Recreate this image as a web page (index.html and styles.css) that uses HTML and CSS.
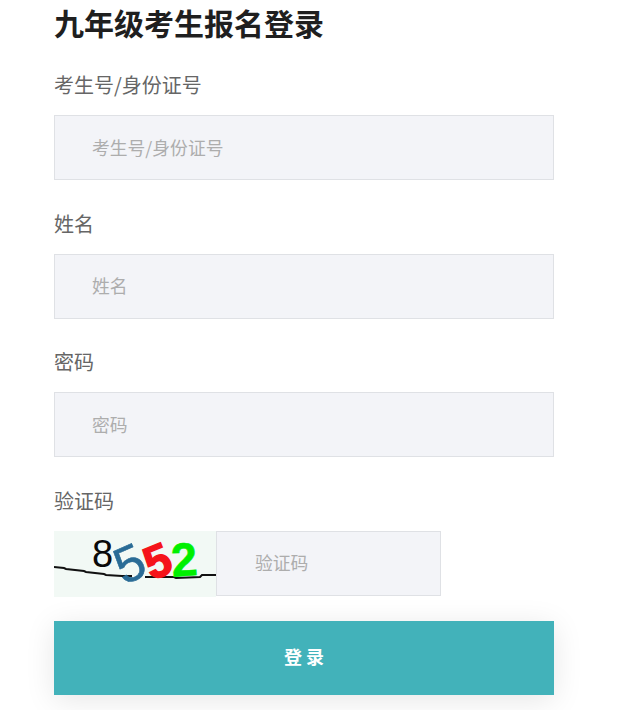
FILE: index.html
```html
<!DOCTYPE html>
<html lang="zh-CN">
<head>
<meta charset="utf-8">
<title>九年级考生报名登录</title>
<link rel="stylesheet" href="styles.css">
</head>
<body>
<main class="panel">
  <h1 class="title">九年级考生报名登录</h1>
  <form class="form">
    <div class="group">
      <label class="label">考生号/身份证号</label>
      <input class="field" type="text" placeholder="考生号/身份证号">
    </div>
    <div class="group">
      <label class="label">姓名</label>
      <input class="field" type="text" placeholder="姓名">
    </div>
    <div class="group">
      <label class="label">密码</label>
      <input class="field" type="password" placeholder="密码">
    </div>
    <div class="group group-code">
      <label class="label">验证码</label>
      <div class="code-row">
        <svg class="captcha" width="162" height="66" viewBox="0 0 162 66" role="img" aria-label="8552">
          <rect width="162" height="66" fill="#f2f9f5"/>
          <polyline class="noise" points="0,36 10,37 12,38 30,40 32,41 50,43 52,44 68,45 78,45"/>
          <polyline class="noise" points="91,46 120,46 122,47 146,46 148,44 162,44"/>
          <text class="digit d1" x="38" y="36">8</text>
          <text class="digit d2" transform="translate(75 31) rotate(-24)" dy="19">5</text>
          <text class="digit d3" transform="translate(103 29) rotate(-22)" dy="17">5</text>
          <text class="digit d4" transform="translate(130 28) rotate(-4)" dy="17">2</text>
        </svg>
        <input class="field field-code" type="text" placeholder="验证码">
      </div>
    </div>
    <button class="submit" type="button">登 录</button>
  </form>
</main>
</body>
</html>
```
FILE: styles.css
```css
* { box-sizing: border-box; }
html, body { margin: 0; height: 100%; overflow: hidden; background: #fff; }
body { font-family: "Noto Sans CJK SC", "Liberation Sans", sans-serif; }
.panel { padding: 0 90px 0 54px; }
.title {
  margin: 0 0 27px;
  padding-top: 1px;
  font-size: 30px;
  line-height: 42px;
  font-weight: 700;
  color: #1f1f1f;
}
.form { display: flex; flex-direction: column; }
.group { display: flex; flex-direction: column; margin-bottom: 29.5px; }
.label {
  font-size: 20px;
  line-height: 30px;
  margin-bottom: 15px;
  color: #666;
}
.group + .group .label { margin-top: -1px; }
.field {
  display: block;
  width: 100%;
  height: 65px;
  padding: 0 20px 2px 37px;
  border: 1px solid #dfe1e5;
  border-radius: 0;
  outline: none;
  background: #f3f4f8;
  font-family: inherit;
  font-size: 17.8px;
  color: #666;
}
.field::placeholder { color: #adadad; opacity: 1; }
.group-code { margin-bottom: 24.5px; }
.code-row { display: flex; align-items: flex-start; }
.captcha { flex: none; display: block; }
.field-code { width: 225px; padding-left: 38px; }
.digit { font-family: "Liberation Sans", sans-serif; text-anchor: middle; }
.d1 { fill: #0a0a0a; font-size: 38px; text-anchor: start; }
.d2 { fill: #2a6c96; font-size: 51px; stroke: #2a6c96; stroke-width: 0.6; }
.d3 { fill: #f5141a; font-size: 46px; font-weight: 700; stroke: #f5141a; stroke-width: 1.5; }
.d4 { fill: #00f000; font-size: 47px; font-weight: 700; stroke: #00f000; stroke-width: 0.6; }
.noise { fill: none; stroke: #111; stroke-width: 2; }
.submit {
  display: block;
  width: 100%;
  height: 74px;
  border: 0;
  border-radius: 0;
  padding: 0 0 4px;
  background: #42b2ba;
  color: #fff;
  font-family: inherit;
  font-size: 18px;
  font-weight: 700;
  box-shadow: 0 5px 30px rgba(0, 0, 0, 0.1);
}
```
